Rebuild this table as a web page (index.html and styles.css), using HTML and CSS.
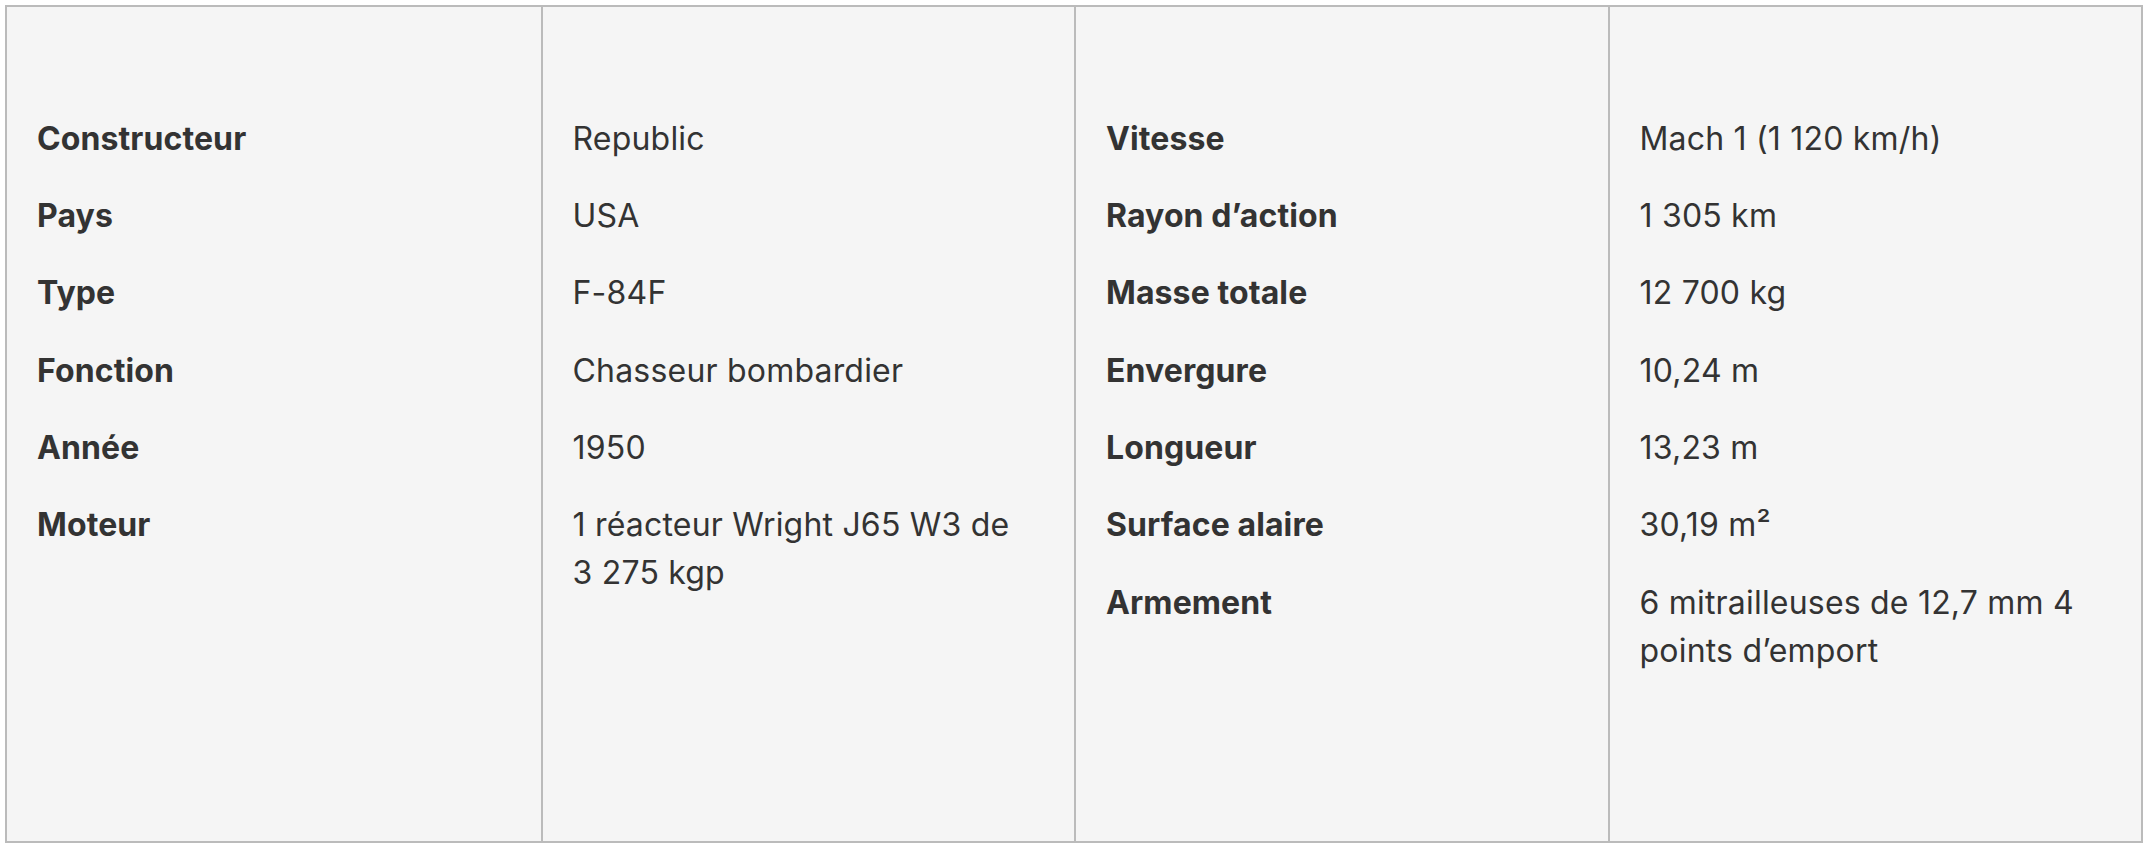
FILE: index.html
```html
<!DOCTYPE html>
<html lang="fr">
<head>
<meta charset="utf-8">
<link rel="stylesheet" href="styles.css">
</head>
<body>
<div class="specs">
  <div class="col">
    <div class="row label">Constructeur</div>
    <div class="row label">Pays</div>
    <div class="row label">Type</div>
    <div class="row label">Fonction</div>
    <div class="row label">Année</div>
    <div class="row label">Moteur</div>
  </div>
  <div class="col">
    <div class="row">Republic</div>
    <div class="row">USA</div>
    <div class="row">F-84F</div>
    <div class="row">Chasseur bombardier</div>
    <div class="row">1950</div>
    <div class="row">1 réacteur Wright J65 W3 de 3&nbsp;275&nbsp;kgp</div>
  </div>
  <div class="col">
    <div class="row label">Vitesse</div>
    <div class="row label">Rayon d’action</div>
    <div class="row label">Masse totale</div>
    <div class="row label">Envergure</div>
    <div class="row label">Longueur</div>
    <div class="row label">Surface alaire</div>
    <div class="row label">Armement</div>
  </div>
  <div class="col">
    <div class="row">Mach 1 (1&nbsp;120&nbsp;km/h)</div>
    <div class="row">1&nbsp;305&nbsp;km</div>
    <div class="row">12&nbsp;700&nbsp;kg</div>
    <div class="row">10,24 m</div>
    <div class="row">13,23 m</div>
    <div class="row">30,19 m²</div>
    <div class="row">6 mitrailleuses de 12,7 mm 4 points d’emport</div>
  </div>
</div>
</body>
</html>
```

FILE: styles.css
```css
html, body {
  margin: 0;
  padding: 0;
  background: #ffffff;
}

body {
  padding: 5px;
  font-family: Inter, "Liberation Sans", sans-serif;
  color: #333333;
}

.specs {
  box-sizing: border-box;
  width: 2138px;
  height: 838px;
  display: grid;
  grid-template-columns: repeat(4, 1fr);
  border: 2px solid #bbbbbb;
  background: #f5f5f5;
}

.col {
  display: flex;
  flex-direction: column;
  gap: 29.4px;
  padding: 107.5px 30px 30px 30px;
  border-left: 2px solid #bbbbbb;
  min-width: 0;
}

.col:first-child {
  border-left: none;
}

.row {
  font-size: 32px;
  line-height: 48px;
  font-weight: 400;
  letter-spacing: 0.2px;
}

.row.label {
  font-weight: 700;
  letter-spacing: 0.1px;
}
```
